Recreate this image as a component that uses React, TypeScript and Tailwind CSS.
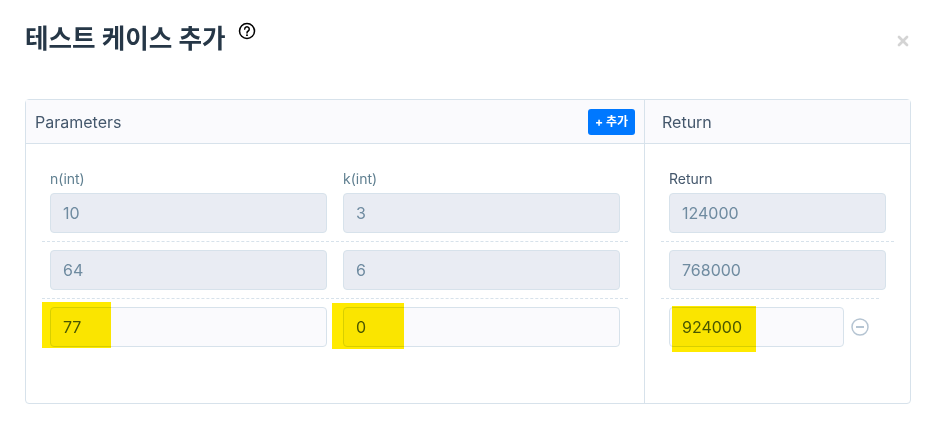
import { X } from 'lucide-react';

const fontStack = "font-['Inter','Noto_Sans_CJK_KR',sans-serif]";

function Field({ value, editable, className }: { value: string; editable?: boolean; className: string }) {
  return (
    <div
      className={`h-10 flex items-center rounded-[4px] border border-[#d7e2eb] pl-[12px] text-[16px] ${
        editable ? 'bg-[#fafafd] text-[#4a5f6e]' : 'bg-[#e9ecf3] text-[#6f8ba0]'
      } ${className}`}
    >
      {value}
    </div>
  );
}

function Divider({ className }: { className: string }) {
  return <div className={`h-0 border-t border-dashed border-[#d7e2eb] ${className}`} />;
}

export default function App() {
  return (
    <div className={`relative h-[446px] w-[928px] overflow-hidden bg-white ${fontStack}`}>
      <div className="flex h-[79px] items-start justify-between pl-[25px] pr-[17px] pt-[20px]">
        <div className="flex items-start">
          <h1 className="text-[25.6px] font-bold leading-[37px] text-[#263747]">테스트 케이스 추가</h1>
          <svg className="ml-[12px] mt-[2px]" width="18" height="18" viewBox="0 0 24 24" fill="none">
            <circle cx="12" cy="12" r="10" stroke="#000" strokeWidth="2" />
            <path d="M9 9.5a3 3 0 1 1 4.6 2.5c-1 .6-1.6 1.2-1.6 2.5" stroke="#000" strokeWidth="2" strokeLinecap="round" />
            <circle cx="12" cy="17.5" r="1.3" fill="#000" />
          </svg>
        </div>
        <X className="mt-[13px] text-[#d4d4d4]" size={16} strokeWidth={4} />
      </div>

      <div className="ml-[25px] mt-[20px] flex h-[305px] w-[886px] rounded-[4px] border border-[#d7e2eb]">
        {/* parameters column */}
        <div className="flex w-[619px] flex-col border-r border-[#d7e2eb]">
          <div className="flex h-[44px] items-center justify-between border-b border-[#d7e2eb] bg-[#fafafd] pl-[9px] pr-[9px] text-[16px] text-[#44576c]">
            <span>Parameters</span>
            <button className="flex h-[26px] w-[47px] items-center justify-center rounded-[3px] bg-[#0078ff] text-[12px] font-bold text-white">
              + 추가
            </button>
          </div>
          <div className="flex flex-col pt-[26px]">
            <div className="flex gap-[16px] pl-[24px]">
              <div className="w-[277px] text-[14px] leading-[18px] text-[#5f7f90]">n(int)</div>
              <div className="w-[277px] text-[14px] leading-[18px] text-[#5f7f90]">k(int)</div>
            </div>
            <div className="mt-[5px] flex gap-[16px] pl-[24px]">
              <Field value="10" className="w-[277px]" />
              <Field value="3" className="w-[277px]" />
            </div>
            <Divider className="ml-[16px] mr-[16px] mt-[8px]" />
            <div className="mt-[8px] flex gap-[16px] pl-[24px]">
              <Field value="64" className="w-[277px]" />
              <Field value="6" className="w-[277px]" />
            </div>
            <Divider className="ml-[16px] mr-[16px] mt-[8px]" />
            <div className="mt-[8px] flex gap-[16px] pl-[24px]">
              <Field value="77" editable className="w-[277px]" />
              <Field value="0" editable className="w-[277px]" />
            </div>
          </div>
        </div>

        {/* return column */}
        <div className="flex flex-1 flex-col">
          <div className="flex h-[44px] items-center border-b border-[#d7e2eb] bg-[#fafafd] pl-[17px] text-[16px] text-[#44576c]">
            Return
          </div>
          <div className="flex flex-col pt-[26px]">
            <div className="pl-[24px] text-[14px] leading-[18px] text-[#44576c]">Return</div>
            <div className="mt-[5px] pl-[24px]">
              <Field value="124000" className="w-[217px]" />
            </div>
            <Divider className="ml-[16px] mr-[16px] mt-[8px]" />
            <div className="mt-[8px] pl-[24px]">
              <Field value="768000" className="w-[217px]" />
            </div>
            <Divider className="ml-[16px] mr-[31px] mt-[8px]" />
            <div className="mt-[8px] flex items-center pl-[24px]">
              <Field value="924000" editable className="w-[175px]" />
              <svg className="ml-[7px]" width="18" height="18" viewBox="0 0 18 18" fill="none">
                <circle cx="9" cy="9" r="8" stroke="#b5c4d2" strokeWidth="1.5" />
                <path d="M5 9h8" stroke="#b5c4d2" strokeWidth="2" />
              </svg>
            </div>
          </div>
        </div>
      </div>

      {/* yellow marker highlights over the answer row */}
      <div className="absolute left-[42px] top-[302px] h-[46px] w-[69px] bg-[#ffea00] mix-blend-multiply" />
      <div className="absolute left-[332px] top-[303px] h-[46px] w-[72px] bg-[#ffea00] mix-blend-multiply" />
      <div className="absolute left-[672px] top-[306px] h-[46px] w-[84px] bg-[#ffea00] mix-blend-multiply" />
    </div>
  );
}
